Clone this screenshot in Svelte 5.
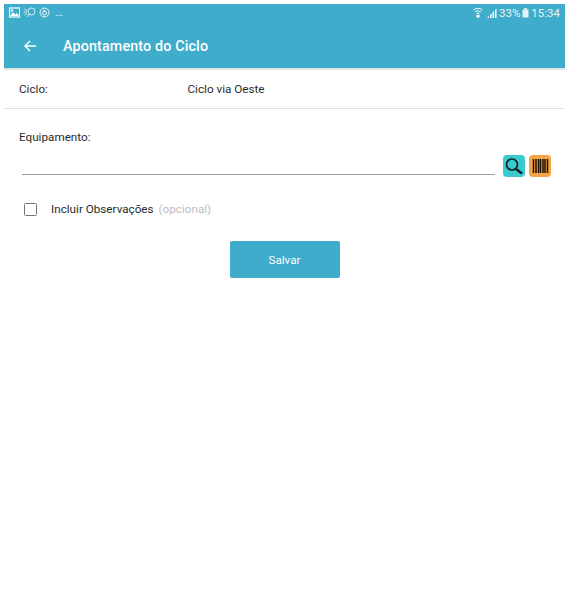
<script lang="ts">
  let incluirObs = $state(false);
</script>

<div class="screen">
  <div class="appbar">
    <div class="status">
      <div class="status-left">
        <svg width="11" height="11" viewBox="0 0 11 11">
          <rect x="0.500" y="1" width="10" height="9" fill="none" stroke="#fff" stroke-width="1.200" />
          <path d="M1 9 L4 5 L6 7.500 L7.500 6 L10 9 Z" fill="#fff" />
          <rect x="2" y="2.500" width="2" height="2" fill="#fff" />
        </svg>
        <svg width="13" height="11" viewBox="0 0 13 11">
          <circle cx="8.500" cy="4.500" r="3.500" fill="none" stroke="#fff" stroke-width="0.800" />
          <path d="M0.500 5 H4 M1.500 2 L4 3.500 M1.500 8 L4 6.500 M4 10 L6 7.500" stroke="#fff" stroke-width="0.800" fill="none" />
        </svg>
        <svg width="11" height="11" viewBox="0 0 11 11">
          <circle cx="5.500" cy="5.500" r="4.500" fill="none" stroke="#fff" stroke-width="0.900" />
          <circle cx="5.500" cy="6" r="2" fill="none" stroke="#fff" stroke-width="0.900" />
          <path d="M5.500 2.500 V5" stroke="#fff" stroke-width="0.900" />
        </svg>
        <span class="dots">...</span>
      </div>
      <div class="status-right">
        <svg width="10" height="11" viewBox="0 0 10 11">
          <path d="M0.500 3 Q5 -0.500 9.500 3 M2 5 Q5 2.500 8 5 M3.500 6.800 Q5 5.800 6.500 6.800" fill="none" stroke="#fff" stroke-width="1" />
          <rect x="3.500" y="8" width="3" height="2.500" fill="#fff" />
        </svg>
        <svg class="signal" width="10" height="10" viewBox="0 0 10 10">
          <path d="M0 10 L2 8 V10 Z M3 10 V7 L4.500 5.500 V10 Z M5.500 10 V4.500 L7 3 V10 Z M8 10 V2 L9.500 0.500 V10 Z" fill="#fff" />
        </svg>
        <span>33%</span>
        <svg width="7" height="10" viewBox="0 0 7 10">
          <rect x="2" y="0" width="3" height="1.500" fill="#fff" opacity="0.800" />
          <rect x="0.500" y="1.500" width="6" height="8" fill="#fff" opacity="0.850" />
        </svg>
        <span>15:34</span>
      </div>
    </div>
    <div class="toolbar">
      <svg class="back" width="14" height="14" viewBox="0 0 14 14">
        <path d="M13 7 H2 M7 2 L2 7 L7 12" fill="none" stroke="#fff" stroke-width="1.400" />
      </svg>
      <span class="title">Apontamento do Ciclo</span>
    </div>
  </div>

  <div class="row-ciclo">
    <span class="ciclo-key">Ciclo:</span>
    <span>Ciclo via Oeste</span>
  </div>

  <div class="equip">
    <div class="equip-label">Equipamento:</div>
    <div class="equip-input">
      <div class="line"></div>
      <button class="icon-btn search" aria-label="Pesquisar">
        <svg width="22" height="22" viewBox="0 0 22 22">
          <circle cx="9" cy="9.500" r="5.500" fill="none" stroke="#0e2528" stroke-width="1.700" />
          <path d="M13 14 L19 18.500" stroke="#0e2528" stroke-width="2.600" />
        </svg>
      </button>
      <button class="icon-btn barcode" aria-label="Código de barras">
        <svg width="22" height="22" viewBox="0 0 22 22">
          <path d="M4.500 4 V18 M7 4 V18 M9.500 4 V18 M11.500 4 V18 M14 4 V18 M16 4 V18 M18.500 4 V18" stroke="#1e1206" stroke-width="1.500" />
        </svg>
      </button>
    </div>
  </div>

  <label class="obs">
    <input type="checkbox" bind:checked={incluirObs} />
    <span class="box"></span>
    <span class="obs-text">Incluir Observações</span>
    <span class="opt">(opcional)</span>
  </label>

  <div class="actions">
    <button class="save">Salvar</button>
  </div>
</div>

<style>
  :global(body) {
    background: #fff;
  }

  .screen {
    width: 561px;
    height: 593px;
    margin-left: 4px;
    padding-top: 4px;
    box-sizing: border-box;
    font-family: Roboto, "Liberation Sans", sans-serif;
    font-size: 11.700px;
    color: #2b2b2b;
  }

  .appbar {
    background: #3eacca;
    height: 64px;
    border-bottom: 2px solid #dfe3e4;
    color: #fff;
  }

  .status {
    display: flex;
    justify-content: space-between;
    align-items: center;
    height: 17px;
    padding: 0 5px 0 5px;
  }

  .status-left, .status-right {
    display: flex;
    align-items: center;
    gap: 3px;
  }

  .status-right {
    font-size: 11.500px;
    color: #e6f5f9;
    gap: 2px;
  }

  .dots { font-size: 10px; margin-left: 2px; }
  .signal { margin-left: 2px; }

  .toolbar {
    display: flex;
    align-items: center;
    height: 50px;
    padding-left: 19px;
  }

  .back { margin-right: 26px; }

  .title {
    font-size: 14.300px;
    font-weight: 500;
    letter-spacing: 0.150px;
  }

  .row-ciclo {
    display: flex;
    height: 38px;
    align-items: center;
    padding-left: 15px;
    border-bottom: 1px solid #e0e0e0;
  }

  .ciclo-key { width: 168.500px; }

  .equip {
    padding-top: 20px;
  }

  .equip-label { padding-left: 15px; line-height: 16px; }

  .equip-input {
    display: flex;
    align-items: flex-end;
    margin-top: 10px;
    padding-left: 18px;
    height: 22px;
  }

  .line {
    width: 473px;
    height: 1px;
    background: #a0a0a0;
    margin-right: 8px;
    margin-bottom: 2px;
  }

  .icon-btn {
    width: 22px;
    height: 22px;
    border: none;
    padding: 0;
    border-radius: 4px;
    margin-right: 4px;
    display: flex;
  }

  .search { background: #3bc9cf; }
  .barcode { background: #f6a545; }

  .obs {
    display: flex;
    align-items: center;
    margin-top: 24px;
    padding-left: 20px;
    height: 16px;
  }

  .obs input { display: none; }

  .box {
    width: 11px;
    height: 11px;
    border: 1.500px solid #757575;
    border-radius: 1.500px;
    margin-right: 14px;
  }

  .obs-text { margin-right: 5px; }
  .opt { color: #bdbdbd; }

  .actions {
    display: flex;
    justify-content: center;
    margin-top: 24px;
  }

  .save {
    width: 110px;
    height: 37px;
    background: #3eacca;
    color: #fff;
    border: none;
    border-radius: 2px;
    font-family: inherit;
    font-size: 11.700px;
  }
</style>
